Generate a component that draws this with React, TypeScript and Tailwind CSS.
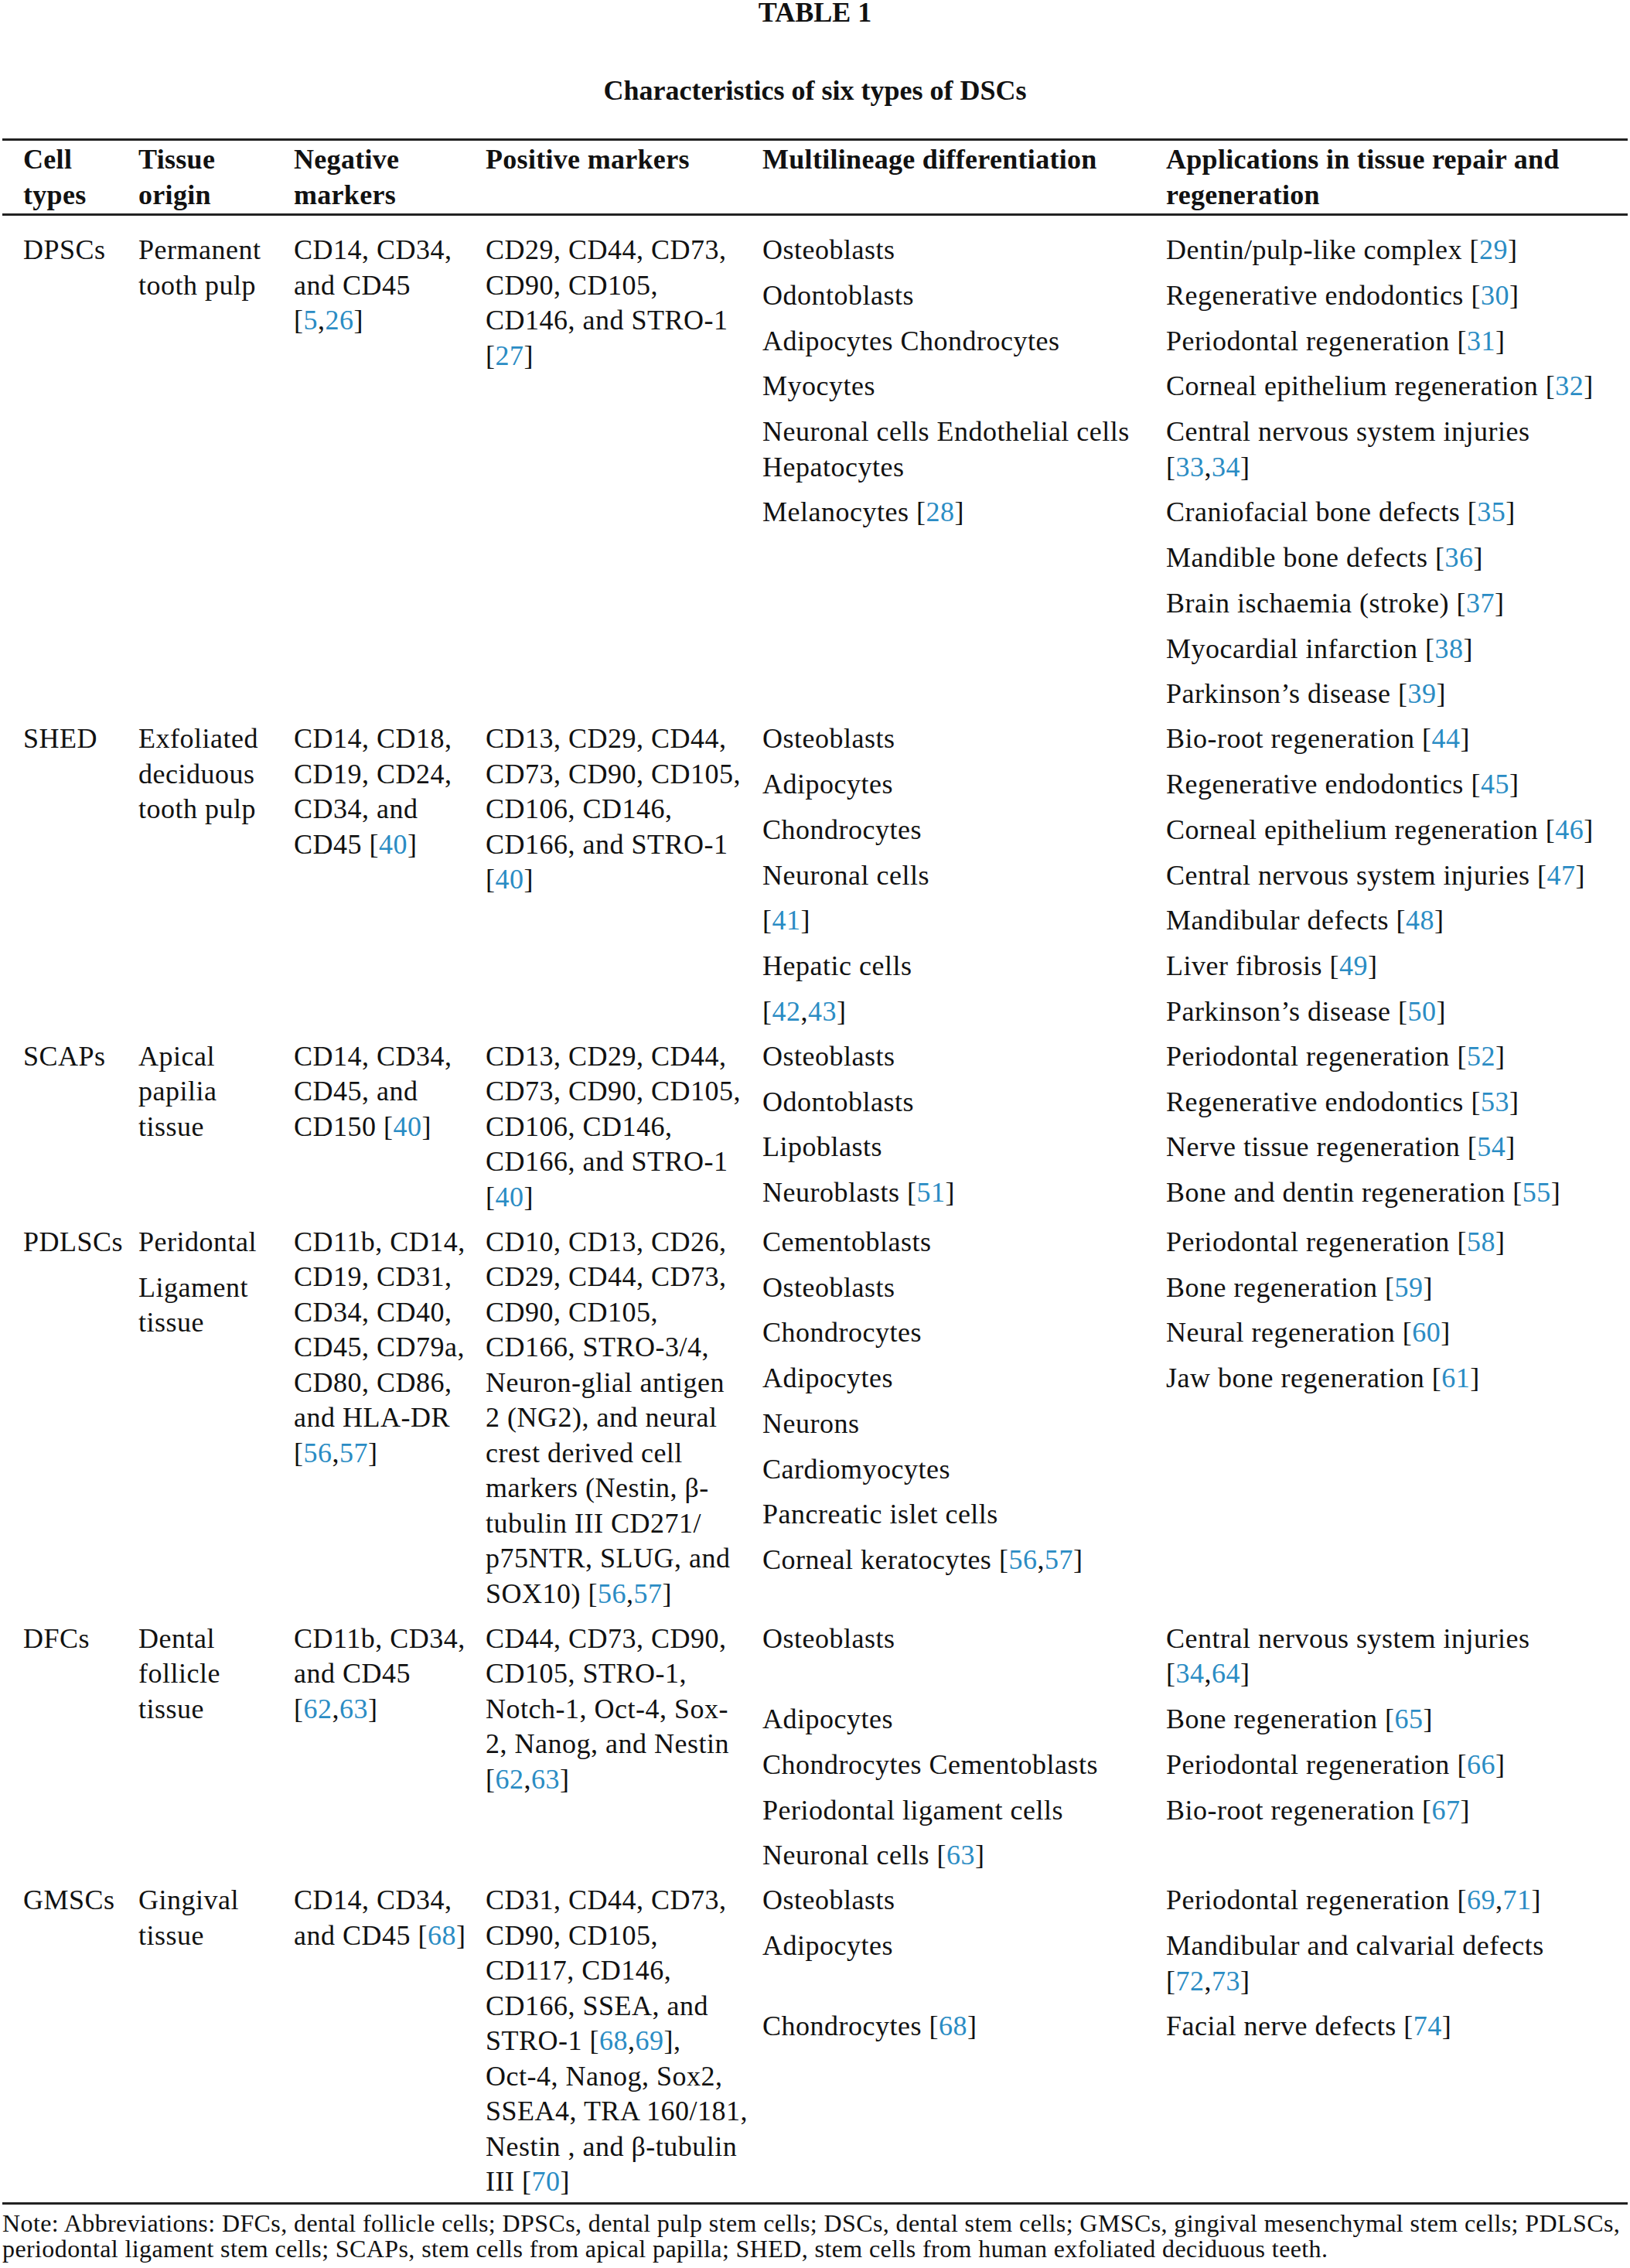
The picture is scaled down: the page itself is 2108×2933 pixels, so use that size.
type Para = string[];

interface Group {
  cell: string;
  tissue: Para[];
  negative: Para[];
  positive: Para[];
  rows: [Para, Para][];
}

const groups: Group[] = [
  {
    cell: "DPSCs",
    tissue: [["Permanent", "tooth pulp"]],
    negative: [["CD14, CD34,", "and CD45", "[5,26]"]],
    positive: [["CD29, CD44, CD73,", "CD90, CD105,", "CD146, and STRO-1", "[27]"]],
    rows: [
      [["Osteoblasts"], ["Dentin/pulp-like complex [29]"]],
      [["Odontoblasts"], ["Regenerative endodontics [30]"]],
      [["Adipocytes Chondrocytes"], ["Periodontal regeneration [31]"]],
      [["Myocytes"], ["Corneal epithelium regeneration [32]"]],
      [
        ["Neuronal cells Endothelial cells", "Hepatocytes"],
        ["Central nervous system injuries", "[33,34]"],
      ],
      [["Melanocytes [28]"], ["Craniofacial bone defects [35]"]],
      [[], ["Mandible bone defects [36]"]],
      [[], ["Brain ischaemia (stroke) [37]"]],
      [[], ["Myocardial infarction [38]"]],
      [[], ["Parkinson’s disease [39]"]],
    ],
  },
  {
    cell: "SHED",
    tissue: [["Exfoliated", "deciduous", "tooth pulp"]],
    negative: [["CD14, CD18,", "CD19, CD24,", "CD34, and", "CD45 [40]"]],
    positive: [["CD13, CD29, CD44,", "CD73, CD90, CD105,", "CD106, CD146,", "CD166, and STRO-1", "[40]"]],
    rows: [
      [["Osteoblasts"], ["Bio-root regeneration [44]"]],
      [["Adipocytes"], ["Regenerative endodontics [45]"]],
      [["Chondrocytes"], ["Corneal epithelium regeneration [46]"]],
      [["Neuronal cells"], ["Central nervous system injuries [47]"]],
      [["[41]"], ["Mandibular defects [48]"]],
      [["Hepatic cells"], ["Liver fibrosis [49]"]],
      [["[42,43]"], ["Parkinson’s disease [50]"]],
    ],
  },
  {
    cell: "SCAPs",
    tissue: [["Apical", "papilia", "tissue"]],
    negative: [["CD14, CD34,", "CD45, and", "CD150 [40]"]],
    positive: [["CD13, CD29, CD44,", "CD73, CD90, CD105,", "CD106, CD146,", "CD166, and STRO-1", "[40]"]],
    rows: [
      [["Osteoblasts"], ["Periodontal regeneration [52]"]],
      [["Odontoblasts"], ["Regenerative endodontics [53]"]],
      [["Lipoblasts"], ["Nerve tissue regeneration [54]"]],
      [["Neuroblasts [51]"], ["Bone and dentin regeneration [55]"]],
    ],
  },
  {
    cell: "PDLSCs",
    tissue: [["Peridontal"], ["Ligament", "tissue"]],
    negative: [
      ["CD11b, CD14,", "CD19, CD31,", "CD34, CD40,", "CD45, CD79a,", "CD80, CD86,", "and HLA-DR", "[56,57]"],
    ],
    positive: [
      [
        "CD10, CD13, CD26,",
        "CD29, CD44, CD73,",
        "CD90, CD105,",
        "CD166, STRO-3/4,",
        "Neuron-glial antigen",
        "2 (NG2), and neural",
        "crest derived cell",
        "markers (Nestin, β-",
        "tubulin III CD271/",
        "p75NTR, SLUG, and",
        "SOX10) [56,57]",
      ],
    ],
    rows: [
      [["Cementoblasts"], ["Periodontal regeneration [58]"]],
      [["Osteoblasts"], ["Bone regeneration [59]"]],
      [["Chondrocytes"], ["Neural regeneration [60]"]],
      [["Adipocytes"], ["Jaw bone regeneration [61]"]],
      [["Neurons"], []],
      [["Cardiomyocytes"], []],
      [["Pancreatic islet cells"], []],
      [["Corneal keratocytes [56,57]"], []],
    ],
  },
  {
    cell: "DFCs",
    tissue: [["Dental", "follicle", "tissue"]],
    negative: [["CD11b, CD34,", "and CD45", "[62,63]"]],
    positive: [["CD44, CD73, CD90,", "CD105, STRO-1,", "Notch-1, Oct-4, Sox-", "2, Nanog, and Nestin", "[62,63]"]],
    rows: [
      [["Osteoblasts"], ["Central nervous system injuries", "[34,64]"]],
      [["Adipocytes"], ["Bone regeneration [65]"]],
      [["Chondrocytes Cementoblasts"], ["Periodontal regeneration [66]"]],
      [["Periodontal ligament cells"], ["Bio-root regeneration [67]"]],
      [["Neuronal cells [63]"], []],
    ],
  },
  {
    cell: "GMSCs",
    tissue: [["Gingival", "tissue"]],
    negative: [["CD14, CD34,", "and CD45 [68]"]],
    positive: [
      [
        "CD31, CD44, CD73,",
        "CD90, CD105,",
        "CD117, CD146,",
        "CD166, SSEA, and",
        "STRO-1 [68,69],",
        "Oct-4, Nanog, Sox2,",
        "SSEA4, TRA 160/181,",
        "Nestin , and β-tubulin",
        "III [70]",
      ],
    ],
    rows: [
      [["Osteoblasts"], ["Periodontal regeneration [69,71]"]],
      [["Adipocytes"], ["Mandibular and calvarial defects", "[72,73]"]],
      [["Chondrocytes [68]"], ["Facial nerve defects [74]"]],
    ],
  },
];

const COLS = "grid grid-cols-[149px_201px_248px_358px_522px_1fr] pl-[30px]";

function RefText({ text }: { text: string }) {
  const parts = text.split(/(\[[\d,]+\])/);
  return (
    <>
      {parts.map((part, i) => {
        const m = part.match(/^\[([\d,]+)\]$/);
        if (!m) return <span key={i}>{part}</span>;
        const nums = m[1].split(",");
        return (
          <span key={i}>
            [
            {nums.map((n, j) => (
              <span key={j}>
                {j > 0 ? "," : ""}
                <span className="text-[#2a8cc4]">{n}</span>
              </span>
            ))}
            ]
          </span>
        );
      })}
    </>
  );
}

function Cell({ paras }: { paras: Para[] }) {
  return (
    <div className="flex flex-col gap-[13.25px]">
      {paras.map((lines, i) => (
        <p key={i}>
          {lines.map((line, j) => (
            <span key={j} className="block whitespace-nowrap">
              <RefText text={line} />
            </span>
          ))}
        </p>
      ))}
    </div>
  );
}

function Rule() {
  return <div className="mx-[3px] h-[3px] bg-[#222]" />;
}

function GroupRows({ group }: { group: Group }) {
  return (
    <div className={`${COLS} items-start`}>
      <Cell paras={[[group.cell]]} />
      <Cell paras={group.tissue} />
      <Cell paras={group.negative} />
      <Cell paras={group.positive} />
      <div className="col-span-2 grid grid-cols-[522px_1fr] content-start gap-y-[13.25px] self-start">
        {group.rows.map(([multi, app], i) => (
          <div key={i} className="contents">
            <Cell paras={multi.length ? [multi] : []} />
            <Cell paras={app.length ? [app] : []} />
          </div>
        ))}
      </div>
    </div>
  );
}

export default function App() {
  return (
    <div className="min-h-[2933px] w-[2108px] bg-white font-['Liberation_Serif','Times_New_Roman',serif] text-[#111]">
      <h1 className="text-center text-[36px] leading-[32px] font-bold">TABLE 1</h1>
      <h2 className="mt-[69px] text-center text-[36px] leading-[32px] font-bold">
        Characteristics of six types of DSCs
      </h2>

      <div className="mt-[46px]">
        <Rule />
        <div className={`${COLS} pt-[2px] pb-[1px] text-[36px] leading-[45.5px] font-bold tracking-[0.3px]`}>
          <Cell paras={[["Cell", "types"]]} />
          <Cell paras={[["Tissue", "origin"]]} />
          <Cell paras={[["Negative", "markers"]]} />
          <Cell paras={[["Positive markers"]]} />
          <Cell paras={[["Multilineage differentiation"]]} />
          <Cell paras={[["Applications in tissue repair and", "regeneration"]]} />
        </div>
        <Rule />
        <div className="flex flex-col gap-[12.5px] pt-[22px] pb-[3px] text-[36px] leading-[45.5px] tracking-[0.5px]">
          {groups.map((g) => (
            <GroupRows key={g.cell} group={g} />
          ))}
        </div>
        <Rule />
      </div>

      <p className="mt-[8px] pl-[3px] text-[32px] leading-[33px] tracking-[0.4px]">
        <span className="block whitespace-nowrap">
          Note: Abbreviations: DFCs, dental follicle cells; DPSCs, dental pulp stem cells; DSCs, dental stem
          cells; GMSCs, gingival mesenchymal stem cells; PDLSCs,
        </span>
        <span className="block whitespace-nowrap">
          periodontal ligament stem cells; SCAPs, stem cells from apical papilla; SHED, stem cells from human
          exfoliated deciduous teeth.
        </span>
      </p>
    </div>
  );
}
